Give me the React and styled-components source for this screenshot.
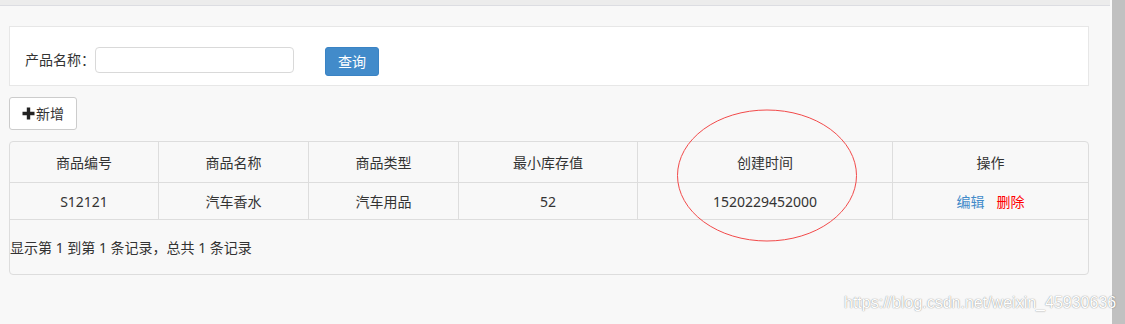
import React from "react";
import styled, { createGlobalStyle } from "styled-components";

const GlobalStyle = createGlobalStyle`
  * { box-sizing: border-box; }
  body {
    margin: 0;
    font-family: "Noto Sans", "Noto Sans CJK SC", sans-serif;
    font-size: 14px;
    color: #333;
    background: #f8f8f8;
  }
`;

const Page = styled.div`
  display: flex;
  height: 324px;
  overflow: hidden;
`;

const Main = styled.div`
  position: relative;
  flex: 1;
  background: #f8f8f8;
  border-right: 2px solid #fafafa;
`;

const Scrollbar = styled.div`
  width: 15px;
  background: #c1c1c1;
`;

const TopStrip = styled.div`
  height: 6px;
  background: #ececec;
  border-bottom: 1px solid #dcdde2;
`;

const Content = styled.div`
  padding: 20px 21px 0 9px;
`;

const SearchPanel = styled.div`
  display: flex;
  align-items: flex-start;
  height: 60px;
  padding: 20px 15px 0;
  background: #fff;
  border: 1px solid #e7e7e7;
`;

const Label = styled.label`
  line-height: 26px;
  white-space: nowrap;
`;

const Input = styled.input`
  width: 199px;
  height: 26px;
  border: 1px solid #d9d9d9;
  border-radius: 4px;
  outline: none;
  font: inherit;
  padding: 0 6px;
`;

const Button = styled.button`
  display: inline-flex;
  align-items: center;
  gap: ${(p) => (p.$icon ? "1px" : "0")};
  height: ${(p) => p.$h}px;
  padding: 0 ${(p) => p.$px}px;
  margin-left: ${(p) => p.$ml || 0}px;
  font-family: "Noto Sans", "Noto Sans CJK SC", sans-serif;
  font-size: 14px;
  line-height: 1;
  border-radius: 3px;
  border: 1px solid ${(p) => (p.$primary ? "#3a83c4" : "#cccccc")};
  background: ${(p) => (p.$primary ? "#428bca" : "#ffffff")};
  color: ${(p) => (p.$primary ? "#fff" : "#333")};
  cursor: pointer;
`;

const Toolbar = styled.div`
  margin-top: 11px;
`;

const TableBox = styled.div`
  margin-top: 11px;
  border: 1px solid #dddddd;
  border-radius: 4px;
`;

const Table = styled.table`
  width: 100%;
  table-layout: fixed;
  border-collapse: separate;
  border-spacing: 0;
`;

const Cell = styled.td`
  width: ${(p) => p.$w}px;
  height: ${(p) => p.$h}px;
  padding: 0;
  text-align: center;
  font-weight: normal;
  vertical-align: middle;
  border-bottom: 1px solid #dddddd;
  border-right: ${(p) => (p.$last ? "none" : "1px solid #dddddd")};
`;

const Link = styled.a`
  color: ${(p) => (p.$danger ? "#ff0000" : "#428bca")};
  text-decoration: none;
  & + & { margin-left: 12px; }
`;

const Footer = styled.div`
  height: 54px;
  display: flex;
  align-items: center;
`;

const Annotation = styled.svg`
  position: absolute;
  left: 676px;
  top: 109px;
  pointer-events: none;
`;

const Watermark = styled.div`
  position: absolute;
  left: 844px;
  top: 294px;
  font-family: "Liberation Sans", Arial, sans-serif;
  font-size: 16px;
  color: #ffffff;
  text-shadow: 0 0 1px rgba(0, 0, 0, 0.45), 0 0 2px rgba(0, 0, 0, 0.15);
  white-space: nowrap;
  z-index: 2;
`;

const columns = [
  { title: "商品编号", w: 149 },
  { title: "商品名称", w: 150 },
  { title: "商品类型", w: 150 },
  { title: "最小库存值", w: 179 },
  { title: "创建时间", w: 255 },
  { title: "操作", w: 195 },
];

const rows = [["S12121", "汽车香水", "汽车用品", "52", "1520229452000"]];

const Plus = () => (
  <svg width="13" height="13" viewBox="0 0 13 13">
    <path d="M4.8 0.5h3.4v4.3h4.3v3.4H8.2v4.3H4.8V8.2H0.5V4.8h4.3z" fill="#222" />
  </svg>
);

export default function App() {
  return (
    <Page>
      <GlobalStyle />
      <Main>
        <TopStrip />
        <Content>
          <SearchPanel>
            <Label htmlFor="name">产品名称：</Label>
            <Input id="name" />
            <Button $primary $h={29} $px={12} $ml={31}>查询</Button>
          </SearchPanel>
          <Toolbar>
            <Button $icon $h={33} $px={12}>
              <Plus />
              新增
            </Button>
          </Toolbar>
          <TableBox>
            <Table>
              <thead>
                <tr>
                  {columns.map((c, i) => (
                    <Cell as="th" key={c.title} $w={c.w} $h={41} $last={i === columns.length - 1}>
                      {c.title}
                    </Cell>
                  ))}
                </tr>
              </thead>
              <tbody>
                {rows.map((r) => (
                  <tr key={r[0]}>
                    {r.map((v, i) => (
                      <Cell key={i} $w={columns[i].w} $h={37}>{v}</Cell>
                    ))}
                    <Cell $w={195} $h={37} $last>
                      <Link href="#">编辑</Link>
                      <Link href="#" $danger>删除</Link>
                    </Cell>
                  </tr>
                ))}
              </tbody>
            </Table>
            <Footer>显示第 1 到第 1 条记录，总共 1 条记录</Footer>
          </TableBox>
        </Content>
        <Annotation width="182" height="134" viewBox="0 0 182 134">
          <ellipse cx="91" cy="66.5" rx="89.5" ry="65.5" fill="none" stroke="#f24a4a" strokeWidth="1" />
        </Annotation>
      </Main>
      <Scrollbar />
      <Watermark>https://blog.csdn.net/weixin_45930636</Watermark>
    </Page>
  );
}
